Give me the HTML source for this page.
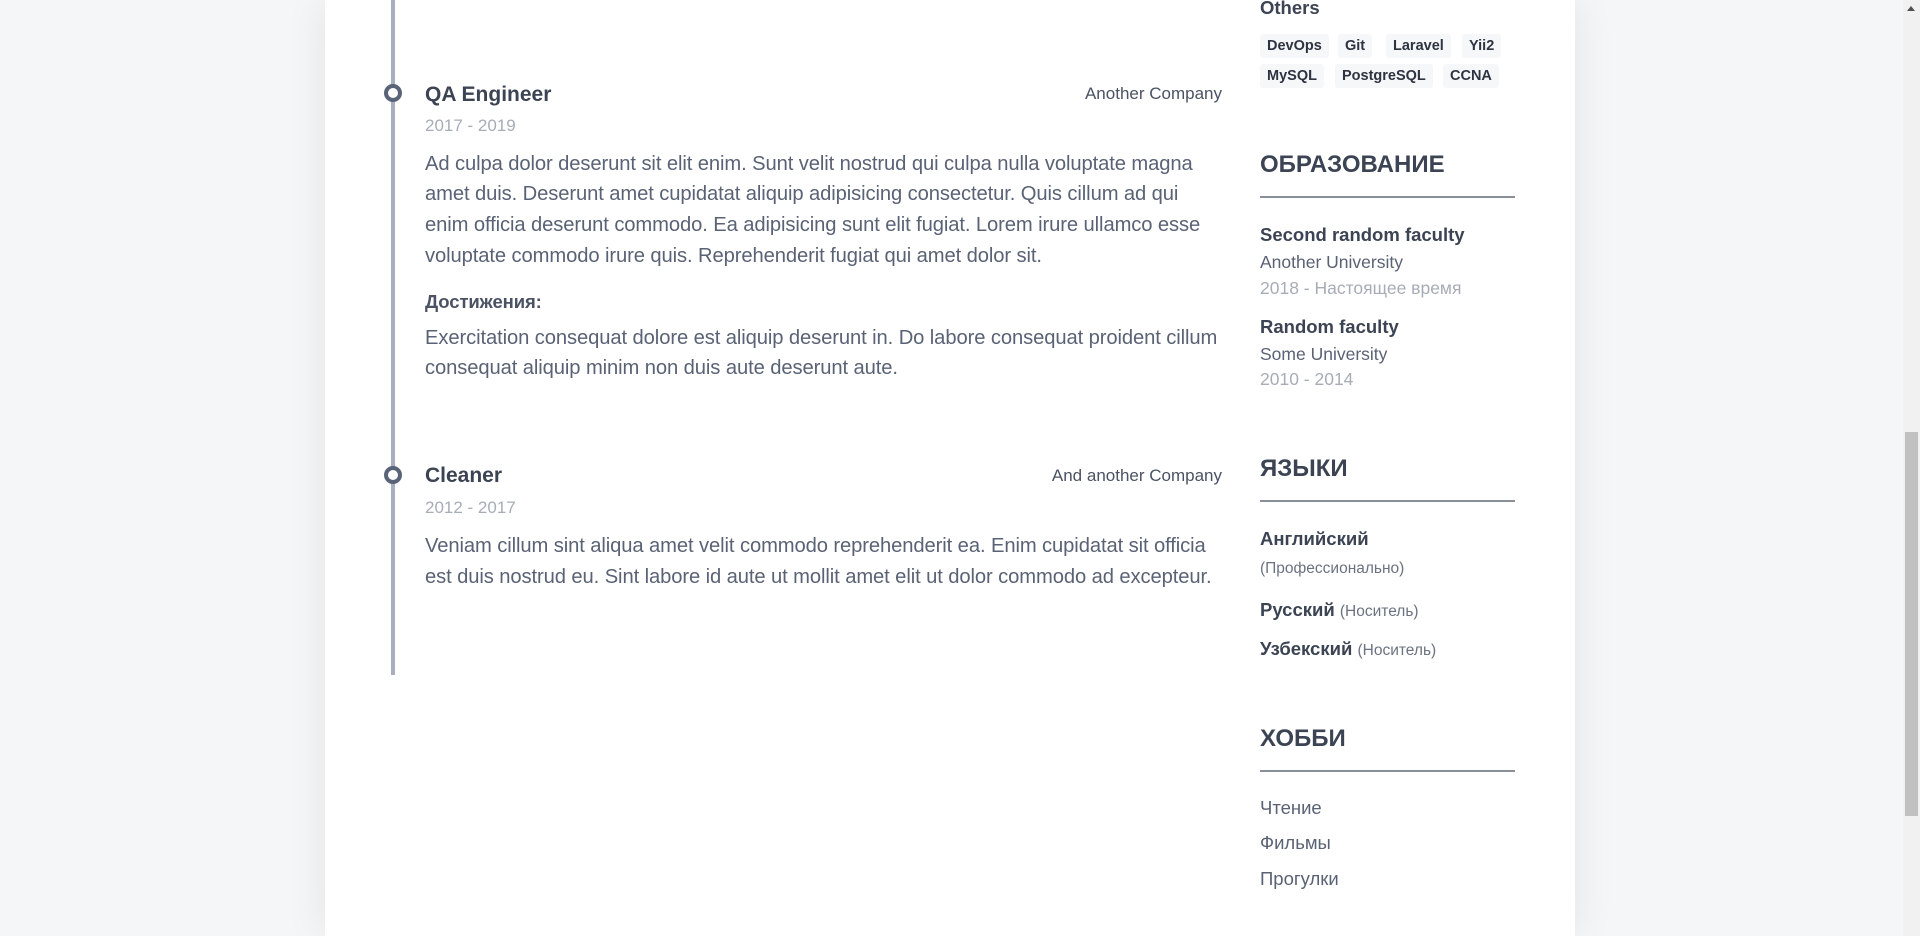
<!DOCTYPE html>
<html><head><meta charset="utf-8"><style>
*{margin:0;padding:0;box-sizing:border-box}
body{width:1920px;height:936px;overflow:hidden;background:#f5f6f8;font-family:"Liberation Sans",Arial,sans-serif;position:relative}
.panel{position:absolute;left:325px;top:0;width:1250px;height:936px;background:#fff;box-shadow:0 0 40px rgba(0,0,0,.08)}
.a{position:absolute;white-space:nowrap;line-height:30px}
.line{position:absolute;left:391px;top:0;width:4px;height:675px;background:#a9afbf}
.dot{position:absolute;width:18px;height:18px;border:4px solid #5a6478;border-radius:50%;background:#fff}
.t{font-size:21px;font-weight:bold;color:#3c4454}
.co{font-size:17px;color:#4a5263}
.d{font-size:17px;color:#a7acb6}
.p{font-size:20.2px;color:#5a6275;letter-spacing:-0.1px}
.h{font-size:24px;font-weight:bold;color:#3c4454}
.hr{position:absolute;left:1260px;width:255px;height:2px;background:#8a9099}
.sb{font-size:18.5px;font-weight:bold;color:#3c4454}
.sn{font-size:17.5px;color:#5a6275}
.sm{font-size:15.5px;color:#6b7280;font-weight:normal}
.tag{position:absolute;height:24px;line-height:24px;padding:0 7px;background:#f6f7f9;border-radius:3px;font-size:14.5px;font-weight:bold;color:#2d3340}
.scroll{position:absolute;right:0;top:0;width:17px;height:936px;background:#f1f1f1}
.thumb{position:absolute;right:2px;top:432px;width:13px;height:384px;background:#c1c1c1}
</style></head><body>
<div class="panel"></div>
<div class="line"></div>
<div class="dot" style="left:384px;top:84px"></div>
<div class="dot" style="left:384px;top:466px"></div>

<div class="a t" style="left:425px;top:80px">QA Engineer</div>
<div class="a co" style="left:900px;width:322px;text-align:right;top:79px">Another Company</div>
<div class="a d" style="left:425px;top:111px">2017 - 2019</div>
<div class="a p" style="left:425px;top:149px">Ad culpa dolor deserunt sit elit enim. Sunt velit nostrud qui culpa nulla voluptate magna</div>
<div class="a p" style="left:425px;top:179px">amet duis. Deserunt amet cupidatat aliquip adipisicing consectetur. Quis cillum ad qui</div>
<div class="a p" style="left:425px;top:210px">enim officia deserunt commodo. Ea adipisicing sunt elit fugiat. Lorem irure ullamco esse</div>
<div class="a p" style="left:425px;top:241px">voluptate commodo irure quis. Reprehenderit fugiat qui amet dolor sit.</div>
<div class="a p" style="left:425px;top:287px;font-weight:bold;color:#4a5263;font-size:18.5px">Достижения:</div>
<div class="a p" style="left:425px;top:323px">Exercitation consequat dolore est aliquip deserunt in. Do labore consequat proident cillum</div>
<div class="a p" style="left:425px;top:353px">consequat aliquip minim non duis aute deserunt aute.</div>

<div class="a t" style="left:425px;top:461px">Cleaner</div>
<div class="a co" style="left:900px;width:322px;text-align:right;top:461px">And another Company</div>
<div class="a d" style="left:425px;top:493px">2012 - 2017</div>
<div class="a p" style="left:425px;top:531px">Veniam cillum sint aliqua amet velit commodo reprehenderit ea. Enim cupidatat sit officia</div>
<div class="a p" style="left:425px;top:562px">est duis nostrud eu. Sint labore id aute ut mollit amet elit ut dolor commodo ad excepteur.</div>

<div class="a sb" style="left:1260px;top:-7px">Others</div>
<div class="tag" style="left:1260px;top:34px">DevOps</div>
<div class="tag" style="left:1338px;top:34px">Git</div>
<div class="tag" style="left:1386px;top:34px">Laravel</div>
<div class="tag" style="left:1462px;top:34px">Yii2</div>
<div class="tag" style="left:1260px;top:64px">MySQL</div>
<div class="tag" style="left:1335px;top:64px">PostgreSQL</div>
<div class="tag" style="left:1443px;top:64px">CCNA</div>

<div class="a h" style="left:1260px;top:150px">ОБРАЗОВАНИЕ</div>
<div class="hr" style="top:196px"></div>
<div class="a sb" style="left:1260px;top:220px">Second random faculty</div>
<div class="a sn" style="left:1260px;top:247px">Another University</div>
<div class="a sn" style="left:1260px;top:273px;color:#a7acb6">2018 - Настоящее время</div>
<div class="a sb" style="left:1260px;top:312px">Random faculty</div>
<div class="a sn" style="left:1260px;top:339px">Some University</div>
<div class="a sn" style="left:1260px;top:364px;color:#a7acb6">2010 - 2014</div>

<div class="a h" style="left:1260px;top:454px">ЯЗЫКИ</div>
<div class="hr" style="top:500px"></div>
<div class="a sb" style="left:1260px;top:524px">Английский</div>
<div class="a sm" style="left:1260px;top:554px">(Профессионально)</div>
<div class="a sb" style="left:1260px;top:595px">Русский <span class="sm">(Носитель)</span></div>
<div class="a sb" style="left:1260px;top:634px">Узбекский <span class="sm">(Носитель)</span></div>

<div class="a h" style="left:1260px;top:724px">ХОББИ</div>
<div class="hr" style="top:770px"></div>
<div class="a sn" style="left:1260px;top:793px;font-size:18.5px">Чтение</div>
<div class="a sn" style="left:1260px;top:828px;font-size:18.5px">Фильмы</div>
<div class="a sn" style="left:1260px;top:864px;font-size:18.5px">Прогулки</div>

<div class="scroll"><div style="position:absolute;left:4px;top:6px;width:0;height:0;border-left:4.5px solid transparent;border-right:4.5px solid transparent;border-bottom:5px solid #505050"></div><div class="thumb"></div></div>
</body></html>
